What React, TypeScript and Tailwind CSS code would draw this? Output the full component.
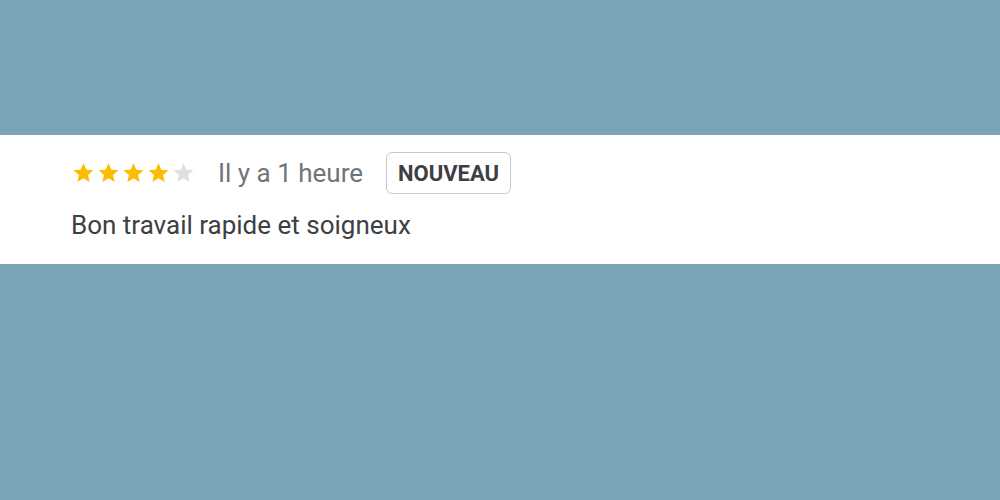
import React from "react";

function Star({ filled }: { filled: boolean }): React.ReactElement {
	return (
		<svg width="25" height="24" viewBox="0 0 24 24" className="shrink-0">
			<path
				d="M12 17.27L18.18 21l-1.64-7.03L22 9.24l-7.19-.61L12 2 9.19 8.63 2 9.24l5.46 4.73L5.82 21z"
				fill={filled ? "#fbbc04" : "#e0e0e0"}
			/>
		</svg>
	);
}

export default function App(): React.ReactElement {
	const rating = 4;
	return (
		<div className="flex flex-col h-[500px] w-[1000px] bg-[#7aa5b9]" style={{ fontFamily: "Roboto, 'Liberation Sans', sans-serif" }}>
			<div className="h-[135px] shrink-0" />
			<div className="h-[129px] shrink-0 bg-white px-[71px] pt-[17px] flex flex-col">
				<div className="flex items-center h-[42px]">
					<div className="flex items-center">
						{[1, 2, 3, 4, 5].map((i) => (
							<Star key={i} filled={i <= rating} />
						))}
					</div>
					<span className="ml-[22px] text-[26px] leading-none text-[#70757a]">Il y a 1 heure</span>
					<span className="ml-[23px] h-[42px] px-[11px] flex items-center rounded-[6px] border border-[#c8c8c8] text-[22px] font-bold text-[#3c4043]">
						NOUVEAU
					</span>
				</div>
				<div className="mt-[16px] text-[26px] leading-[30px] text-[#3c4043]">Bon travail rapide et soigneux</div>
			</div>
			<div className="flex-1" />
		</div>
	);
}
